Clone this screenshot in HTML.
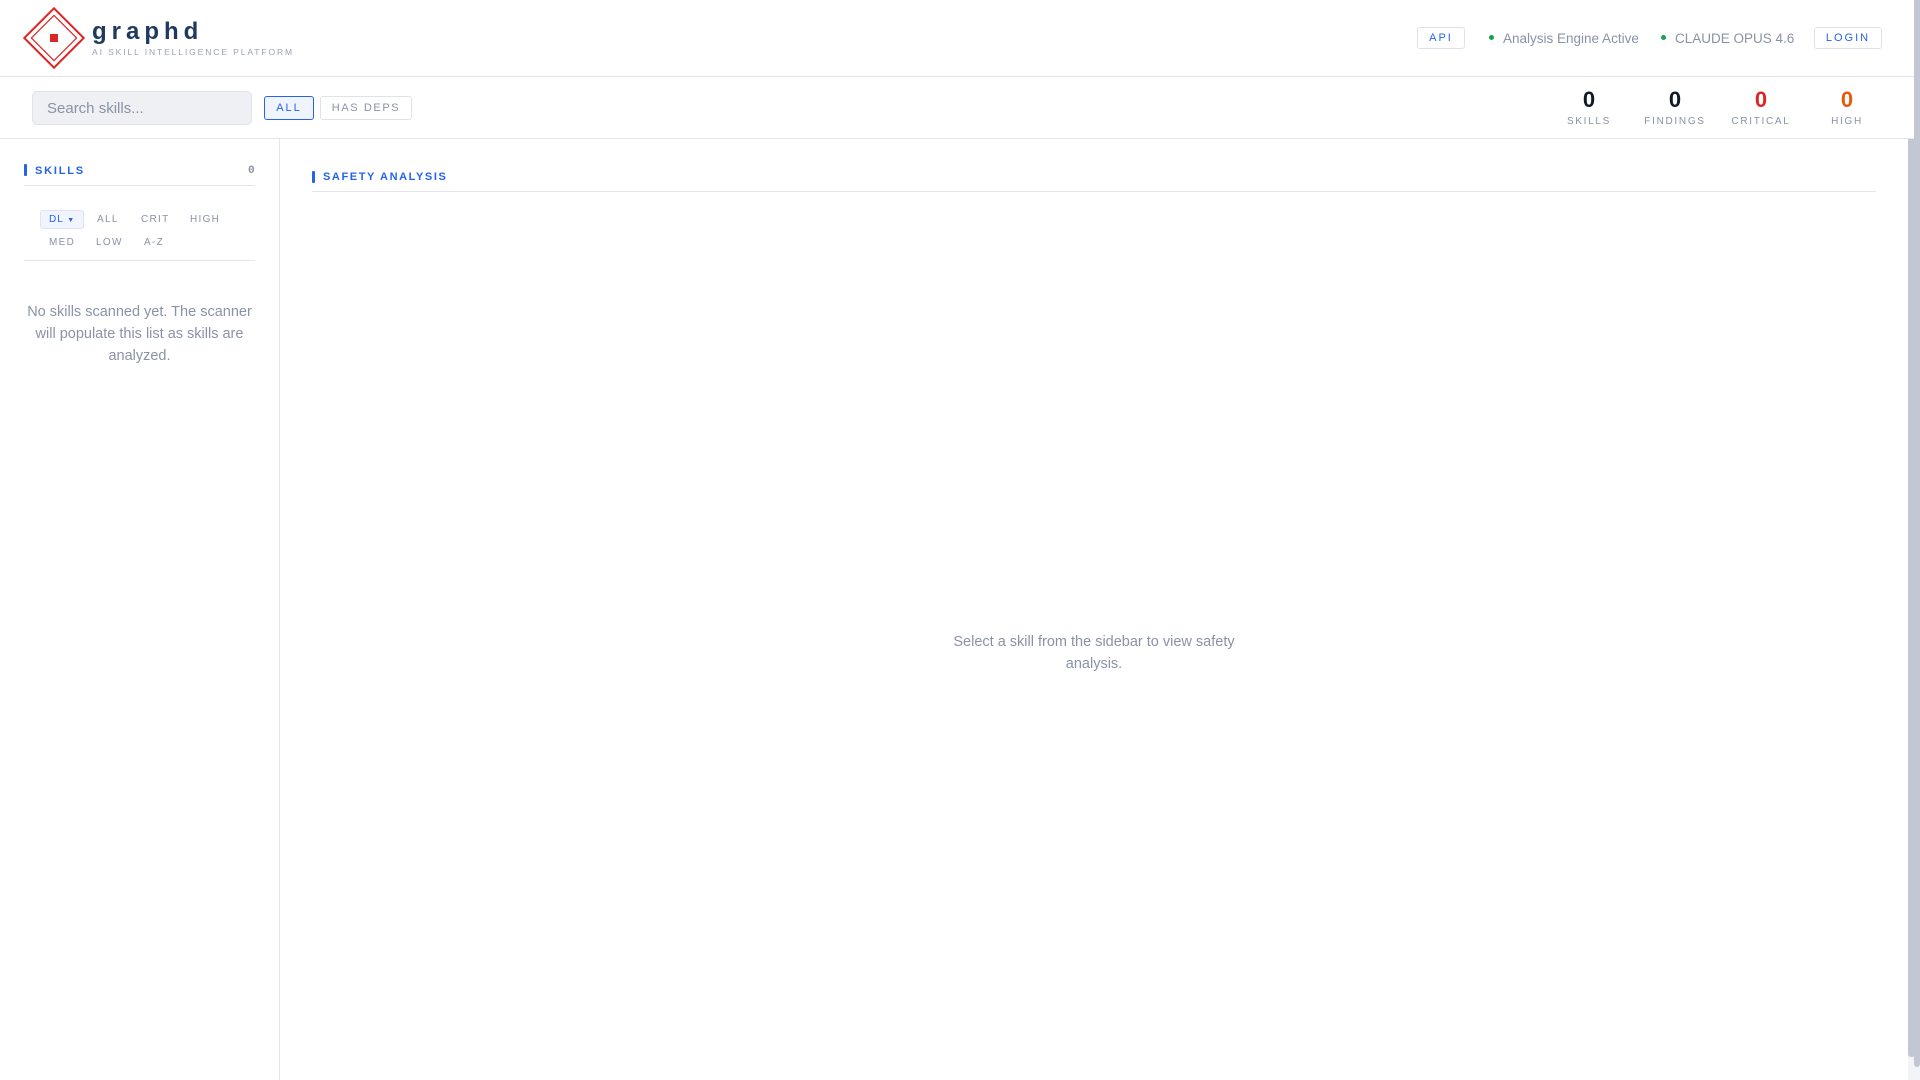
<!DOCTYPE html>
<html><head><meta charset="utf-8"><style>
*{box-sizing:border-box;margin:0;padding:0}
body{width:1920px;height:1080px;background:#fff;font-family:"Liberation Sans",sans-serif;position:relative;overflow:hidden}
.a{position:absolute}
.hdr{left:0;top:0;width:1920px;height:77px;border-bottom:1px solid #e3e5ec}
.tb{left:0;top:77px;width:1920px;height:62px;border-bottom:1px solid #e3e5ec}
.btn{border:1px solid #dfe2ea;border-radius:3px;font-size:11px;letter-spacing:2px;text-align:center;color:#2563eb}
.muted{color:#8a92a6}
.num{font-size:22px;font-weight:bold;text-align:center;width:100px}
.lab{font-size:10px;letter-spacing:1.7px;color:#8a92a6;text-align:center;width:100px}
.chip{font-size:10px;letter-spacing:1.3px;color:#8a92a6}
</style></head><body>
<div class="a hdr"></div>
<svg class="a" style="left:23px;top:7px" width="62" height="62" viewBox="0 0 62 62">
<rect x="10" y="10" width="42" height="42" transform="rotate(45 31 31)" fill="none" stroke="#dc2626" stroke-width="2"/>
<rect x="15" y="15" width="32" height="32" transform="rotate(45 31 31)" fill="none" stroke="#dc2626" stroke-width="1.2"/>
<rect x="27" y="27" width="8" height="8" fill="#dc2626"/>
</svg>
<div class="a" style="left:92px;top:18px;font-size:24px;font-weight:bold;letter-spacing:5px;color:#1e3a5f">graphd</div>
<div class="a" style="left:92px;top:47px;font-size:8.5px;letter-spacing:1.9px;color:#9aa1b2">AI SKILL INTELLIGENCE PLATFORM</div>
<div class="a btn" style="left:1417px;top:27px;width:48px;height:22px;line-height:20px">API</div>
<div class="a" style="left:1489px;top:35px;width:5px;height:5px;border-radius:50%;background:#16a34a"></div>
<div class="a muted" style="left:1503px;top:31px;font-size:13.5px">Analysis Engine Active</div>
<div class="a" style="left:1661px;top:35px;width:5px;height:5px;border-radius:50%;background:#16a34a"></div>
<div class="a muted" style="left:1675px;top:31px;font-size:13.5px">CLAUDE OPUS 4.6</div>
<div class="a btn" style="left:1814px;top:27px;width:68px;height:22px;line-height:20px">LOGIN</div>

<div class="a tb"></div>
<div class="a" style="left:32px;top:91px;width:220px;height:34px;background:#eef0f4;border:1px solid #e0e3ea;border-radius:5px;font-size:15px;color:#8a92a6;padding:8px 14px">Search skills...</div>
<div class="a btn" style="left:264px;top:96px;width:50px;height:24px;line-height:22px;border-color:#2563eb;background:#eff4ff">ALL</div>
<div class="a btn" style="left:320px;top:96px;width:92px;height:24px;line-height:22px;color:#8a92a6;letter-spacing:1.6px">HAS DEPS</div>
<div class="a num" style="left:1539px;top:87px;color:#111827">0</div><div class="a lab" style="left:1539px;top:116px">SKILLS</div>
<div class="a num" style="left:1625px;top:87px;color:#111827">0</div><div class="a lab" style="left:1625px;top:116px">FINDINGS</div>
<div class="a num" style="left:1711px;top:87px;color:#dc2626">0</div><div class="a lab" style="left:1711px;top:116px">CRITICAL</div>
<div class="a num" style="left:1797px;top:87px;color:#ea580c">0</div><div class="a lab" style="left:1797px;top:116px">HIGH</div>

<div class="a" style="left:279px;top:139px;width:1px;height:941px;background:#e3e5ec"></div>
<div class="a" style="left:24px;top:164px;width:3px;height:12px;background:#2563eb;border-radius:1px"></div>
<div class="a" style="left:35px;top:165px;font-size:11px;font-weight:bold;letter-spacing:1.8px;color:#2563eb">SKILLS</div>
<div class="a" style="left:248px;top:165px;font-size:11px;font-family:'Liberation Mono',monospace;font-weight:bold;color:#8a92a6">0</div>
<div class="a" style="left:24px;top:185px;width:231px;height:1px;background:#e3e5ec"></div>
<div class="a" style="left:40px;top:210px;width:44px;height:19px;background:#eff4ff;border:1px solid #dfe3ee;border-radius:3px;font-size:10px;letter-spacing:1px;color:#2563eb;padding:3px 0 0 8px">DL <span style="font-size:7px">▼</span></div>
<div class="a chip" style="left:97px;top:214px">ALL</div>
<div class="a chip" style="left:141px;top:214px">CRIT</div>
<div class="a chip" style="left:190px;top:214px">HIGH</div>
<div class="a chip" style="left:49px;top:237px">MED</div>
<div class="a chip" style="left:96px;top:237px">LOW</div>
<div class="a chip" style="left:144px;top:237px">A-Z</div>
<div class="a" style="left:24px;top:260px;width:231px;height:1px;background:#e3e5ec"></div>
<div class="a muted" style="left:24px;top:301px;width:231px;text-align:center;font-size:14.5px;line-height:22px">No skills scanned yet. The scanner<br>will populate this list as skills are<br>analyzed.</div>

<div class="a" style="left:312px;top:171px;width:3px;height:12px;background:#2563eb;border-radius:1px"></div>
<div class="a" style="left:323px;top:171px;font-size:11px;font-weight:bold;letter-spacing:1.6px;color:#2563eb">SAFETY ANALYSIS</div>
<div class="a" style="left:312px;top:191px;width:1564px;height:1px;background:#e3e5ec"></div>
<div class="a muted" style="left:944px;top:631px;width:300px;text-align:center;font-size:14.5px;line-height:22px">Select a skill from the sidebar to view safety analysis.</div>

<div class="a" style="left:1908px;top:139px;width:12px;height:941px;background:#f3f4f7"></div>
<div class="a" style="left:1908px;top:139px;width:7px;height:918px;background:#c3c7d3;border-radius:0 0 3px 3px"></div>
<div class="a" style="left:1914px;top:0;width:6px;height:1067px;background:#c3c7d3;border-radius:0 0 3px 3px"></div>
</body></html>
